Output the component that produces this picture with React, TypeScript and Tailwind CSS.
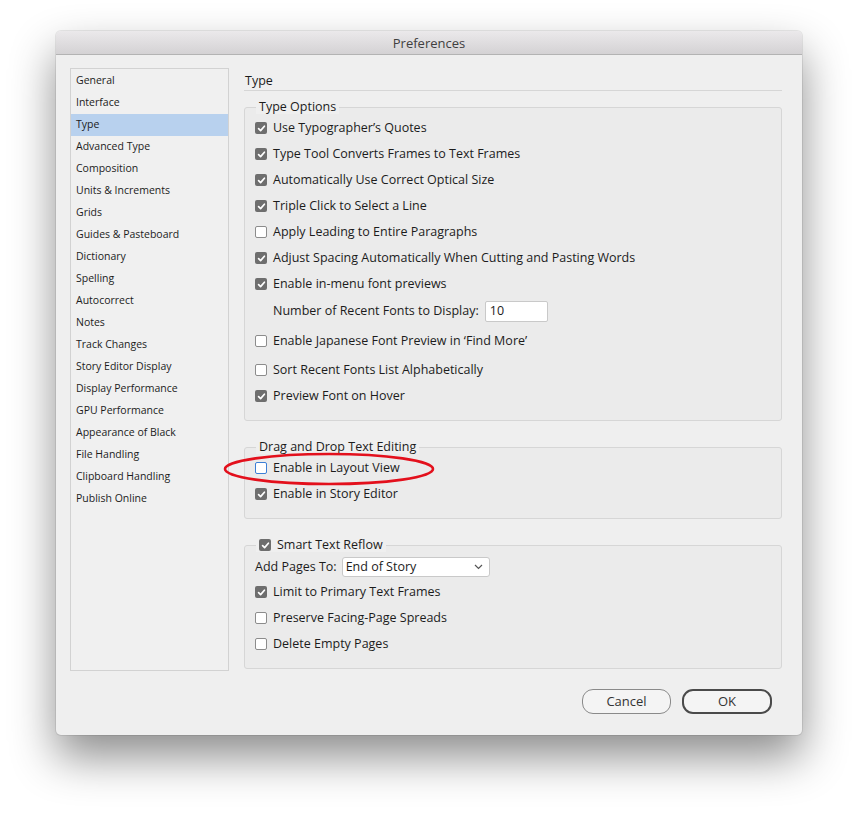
import React from 'react';

const sidebarItems = [
  'General',
  'Interface',
  'Type',
  'Advanced Type',
  'Composition',
  'Units & Increments',
  'Grids',
  'Guides & Pasteboard',
  'Dictionary',
  'Spelling',
  'Autocorrect',
  'Notes',
  'Track Changes',
  'Story Editor Display',
  'Display Performance',
  'GPU Performance',
  'Appearance of Black',
  'File Handling',
  'Clipboard Handling',
  'Publish Online',
];

function Checkbox({ checked, focused }: { checked?: boolean; focused?: boolean }) {
  if (checked) {
    return (
      <span className="w-[12px] h-[12px] rounded-[2px] bg-[#6e6e6e] flex items-center justify-center shrink-0">
        <svg width="9" height="9" viewBox="0 0 9 9" fill="none">
          <path d="M1.6 4.7 L3.6 6.6 L7.4 2.2" stroke="#fff" strokeWidth="1.7" strokeLinecap="round" strokeLinejoin="round" />
        </svg>
      </span>
    );
  }
  return (
    <span
      className={`w-[12px] h-[12px] rounded-[2px] bg-white shrink-0 border ${
        focused ? 'border-[#3c7fd6]' : 'border-[#8c8c8c]'
      }`}
    />
  );
}

function Row({ label, checked, focused, h = 'h-[26px]' }: { label: string; checked?: boolean; focused?: boolean; h?: string }) {
  return (
    <div className={`${h} flex items-center gap-[6px] pl-[10px]`}>
      <Checkbox checked={checked} focused={focused} />
      <span>{label}</span>
    </div>
  );
}

function Legend({ children }: { children: React.ReactNode }) {
  return (
    <div className="-mt-[8px] ml-[11px] px-[3px] w-fit bg-[#efefef] leading-[14px] flex items-center gap-[6px]">
      {children}
    </div>
  );
}

export default function App() {
  return (
    <div
      className="min-h-screen bg-white pt-[31px] pl-[56px] text-[12.5px] text-[#1c1c1c]"
      style={{ fontFamily: '"Open Sans", "Liberation Sans", sans-serif' }}
    >
      <div className="relative w-[746px] h-[704px] bg-[#efefef] rounded-[5px] shadow-[0_22px_45px_rgba(0,0,0,0.45),0_0_0_1px_rgba(0,0,0,0.08)] flex flex-col">
        {/* Title bar */}
        <div className="h-[24px] rounded-t-[5px] bg-gradient-to-b from-[#ebe9eb] to-[#d4d2d4] border-b border-[#b3b3b3] flex items-center justify-center pt-[2px] text-[13px] text-[#404040]">
          Preferences
        </div>

        {/* Body */}
        <div className="flex-1 flex flex-col pt-[13px] pl-[14px] pr-[20px]">
          <div className="flex h-[603px] gap-[15px]">
            {/* Sidebar */}
            <div className="w-[159px] border border-[#d2d2d2] bg-[#f0f0f0] pt-[1px] text-[10.5px]">
              {sidebarItems.map((item) => (
                <div
                  key={item}
                  className={`h-[22px] flex items-center pl-[5px] ${item === 'Type' ? 'bg-[#b8d1ee]' : ''}`}
                >
                  {item}
                </div>
              ))}
            </div>

            {/* Right panel */}
            <div className="flex-1 flex flex-col">
              <div className="pt-[5px] pb-[1px] leading-[16px] pl-[1px] border-b border-[#d6d6d6]">Type</div>

              {/* Type Options */}
              <div className="mt-[16px] border border-[#d6d6d6] rounded-[3px] bg-[#ebebeb] pb-[11px]">
                <Legend>Type Options</Legend>
                <div className="mt-[1px]">
                  <Row label="Use Typographer’s Quotes" checked />
                  <Row label="Type Tool Converts Frames to Text Frames" checked />
                  <Row label="Automatically Use Correct Optical Size" checked />
                  <Row label="Triple Click to Select a Line" checked />
                  <Row label="Apply Leading to Entire Paragraphs" />
                  <Row label="Adjust Spacing Automatically When Cutting and Pasting Words" checked />
                  <Row label="Enable in-menu font previews" checked />
                  <div className="h-[28px] flex items-center pl-[28px] gap-[6px]">
                    <span>Number of Recent Fonts to Display:</span>
                    <div className="w-[63px] h-[21px] bg-white border border-[#c9c9c9] rounded-[2px] flex items-center pl-[4px]">10</div>
                  </div>
                  <Row label="Enable Japanese Font Preview in ‘Find More’" h="h-[32px]" />
                  <Row label="Sort Recent Fonts List Alphabetically" />
                  <Row label="Preview Font on Hover" checked />
                </div>
              </div>

              {/* Drag and Drop */}
              <div className="mt-[26px] border border-[#d6d6d6] rounded-[3px] bg-[#ebebeb] pb-[11px]">
                <Legend>Drag and Drop Text Editing</Legend>
                <div className="mt-[1px]">
                  <Row label="Enable in Layout View" focused />
                  <Row label="Enable in Story Editor" checked />
                </div>
              </div>

              {/* Smart Text Reflow */}
              <div className="mt-[26px] border border-[#d6d6d6] rounded-[3px] bg-[#ebebeb] pb-[11px]">
                <Legend>
                  <Checkbox checked />
                  <span>Smart Text Reflow</span>
                </Legend>
                <div className="h-[27px] pt-[3px] flex items-center pl-[10px] gap-[5px]">
                  <span>Add Pages To:</span>
                  <div className="w-[148px] h-[20px] bg-white border border-[#c9c9c9] rounded-[3px] flex items-center justify-between pl-[3px] pr-[6px]">
                    <span>End of Story</span>
                    <svg width="9" height="6" viewBox="0 0 9 6" fill="none">
                      <path d="M1 1 L4.5 4.5 L8 1" stroke="#555" strokeWidth="1.2" />
                    </svg>
                  </div>
                </div>
                <Row label="Limit to Primary Text Frames" checked />
                <Row label="Preserve Facing-Page Spreads" />
                <Row label="Delete Empty Pages" />
              </div>
            </div>
          </div>

          {/* Buttons */}
          <div className="mt-[18px] flex justify-end gap-[11px] pr-[10px] text-[13px] text-[#333]">
            <button className="w-[89px] h-[25px] rounded-[11px] border border-[#8a8a8a] bg-[#f4f4f4] flex items-center justify-center pt-[1px]">
              Cancel
            </button>
            <button className="w-[90px] h-[25px] rounded-[11px] border-2 border-[#4a4a4a] bg-[#f4f4f4] flex items-center justify-center pt-[1px]">
              OK
            </button>
          </div>
        </div>

        {/* Red annotation ellipse */}
        <svg
          className="absolute left-[167px] top-[420px] pointer-events-none"
          width="214"
          height="36"
          viewBox="0 0 214 36"
          fill="none"
        >
          <ellipse cx="106" cy="18" rx="104" ry="15" stroke="#e3101c" strokeWidth="2.6" />
        </svg>
      </div>
    </div>
  );
}
